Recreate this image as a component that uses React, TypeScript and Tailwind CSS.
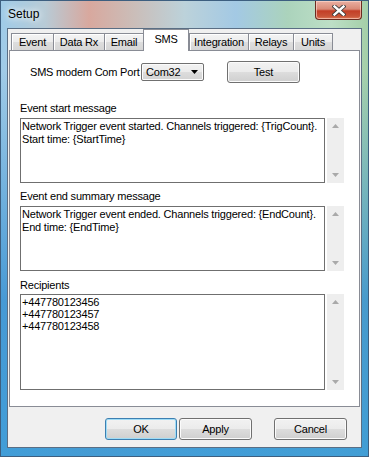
import React from "react";

const F = "font-['Liberation_Sans',Arial,sans-serif]";

const tabs: [string, number][] = [
  ["Event", 42],
  ["Data Rx", 51],
  ["Email", 39],
  ["SMS", 46],
  ["Integration", 59],
  ["Relays", 45],
  ["Units", 40],
];

function Tab({ label, width, selected }: { label: string; width: number; selected: boolean }) {
  if (selected) {
    return (
      <div
        style={{ width }}
        className="relative z-10 mb-[-1px] flex h-[22px] items-start justify-center whitespace-nowrap border-x border-t border-[#898c95] bg-white pt-[3px] text-[11px] leading-[13px] text-black"
      >
        {label}
      </div>
    );
  }
  return (
    <div
      style={{ width }}
      className="flex h-[17px] items-start justify-center whitespace-nowrap border-l border-t border-[#898c95] bg-[linear-gradient(180deg,#f4f4f4_0%,#ececec_50%,#dedede_50%,#d6d6d6_100%)] pt-[2px] text-[11px] leading-[13px] text-black shadow-[inset_1px_1px_0_#ffffff] last:border-r"
    >
      {label}
    </div>
  );
}

function ScrollBar({ h }: { h: number }) {
  return (
    <div
      style={{ height: h }}
      className="flex w-[17px] shrink-0 flex-col items-center justify-between bg-[#eeeeee] py-[6px]"
    >
      <svg width="7" height="4" viewBox="0 0 7 4">
        <path d="M0 4 L3.5 0 L7 4 Z" fill="#a9a9a9" />
      </svg>
      <svg width="7" height="4" viewBox="0 0 7 4">
        <path d="M0 0 L7 0 L3.5 4 Z" fill="#a9a9a9" />
      </svg>
    </div>
  );
}

function TextBox({ h, lines, lh }: { h: number; lines: string[]; lh: string }) {
  return (
    <div className="flex gap-[2px] pl-[10px]">
      <div
        style={{ height: h }}
        className={`w-[305px] shrink-0 overflow-hidden border border-[#6f6f6f] bg-white px-[1px] pt-[1px] text-[11px] text-black ${lh}`}
      >
        {lines.map((l, i) => (
          <div key={i} className="whitespace-pre">
            {l}
          </div>
        ))}
      </div>
      <ScrollBar h={h} />
    </div>
  );
}

function Btn({ label, w, def }: { label: string; w: number; def?: boolean }) {
  return (
    <div
      style={{ width: w }}
      className={
        def
          ? "flex h-[22px] items-center justify-center rounded-[3px] border border-[#3c7fb1] bg-[linear-gradient(180deg,#f2f2f2_0%,#ebebeb_50%,#dddddd_50%,#cfcfcf_100%)] text-[11px] text-black shadow-[inset_0_0_0_1px_#9fdcf6]"
          : "flex h-[22px] items-center justify-center rounded-[3px] border border-[#707070] bg-[linear-gradient(180deg,#f2f2f2_0%,#ebebeb_50%,#dddddd_50%,#cfcfcf_100%)] text-[11px] text-black shadow-[inset_0_0_0_1px_#fbfbfb]"
      }
    >
      {label}
    </div>
  );
}

export default function App() {
  return (
    <div
      className={`${F} flex h-[457px] w-[369px] flex-col border border-[#3d5f80] tracking-[-0.2px] bg-[linear-gradient(180deg,rgba(120,180,225,0)_0px,rgba(120,180,225,0)_70px,rgba(55,145,210,0.85)_300px,rgba(60,155,215,0.95)_457px),linear-gradient(90deg,#9fcbe8_0%,#b8cbd6_12%,#d8a89e_24%,#cbbdb8_36%,#bcd2da_50%,#a3c9e4_64%,#abd3bc_78%,#bddfc6_90%,#a4cfa8_100%)]`}
    >
      {/* title bar */}
      <div className="flex h-[27px] items-start justify-between pl-[7px] pr-[6px]">
        <div className="pt-[6px] text-[12px] leading-[15px] tracking-normal text-black [text-shadow:0_0_6px_#ffffff,0_0_10px_#ffffff]">
          Setup
        </div>
        <div className="flex h-[19px] w-[47px] items-center justify-center rounded-b-[4px] border border-t-0 border-[#6b2b20] bg-[linear-gradient(180deg,#eab0a2_0%,#d98a77_45%,#c33e26_55%,#c85438_85%,#e07a58_100%)] shadow-[inset_0_0_0_1px_rgba(255,220,210,0.6)]">
          <svg width="14" height="11" viewBox="0 0 14 11">
            <path d="M2.5 1.5 L11.5 9.5 M11.5 1.5 L2.5 9.5" stroke="#3a3a3a" strokeWidth="4.2" strokeLinecap="square" />
            <path d="M2.5 1.5 L11.5 9.5 M11.5 1.5 L2.5 9.5" stroke="#ffffff" strokeWidth="2.4" strokeLinecap="square" />
          </svg>
        </div>
      </div>

      {/* client */}
      <div className="mx-[6px] flex h-[420px] flex-col border border-[#5a6e84] bg-[#f0f0f0]">
        {/* tabs */}
        <div className="flex h-[21px] items-end pl-[3px]">
          {tabs.map(([t, w]) => (
            <Tab key={t} label={t} width={w} selected={t === "SMS"} />
          ))}
        </div>

        {/* panel */}
        <div className="ml-[1px] flex h-[357px] w-[351px] flex-col border border-[#898c95] bg-white text-[11px] text-black">
          <div className="mt-[10px] flex h-[22px] items-center pl-[20px]">
            <div className="w-[111px] shrink-0 whitespace-nowrap leading-[13px]">SMS modem Com Port</div>
            <div className="flex h-[18px] w-[63px] shrink-0 items-center justify-between rounded-[2px] border border-[#707070] bg-[linear-gradient(180deg,#f2f2f2_0%,#ebebeb_50%,#dddddd_50%,#d3d3d3_100%)] pl-[4px] pr-[5px] shadow-[inset_0_0_0_1px_#fbfbfb]">
              <span className="leading-[13px]">Com32</span>
              <svg width="7" height="4" viewBox="0 0 7 4">
                <path d="M0 0 L7 0 L3.5 4 Z" fill="#000000" />
              </svg>
            </div>
            <div className="ml-[23px]">
              <Btn label="Test" w={73} />
            </div>
          </div>

          <div className="mt-[19px] whitespace-nowrap pl-[10px] leading-[13px]">Event start message</div>
          <div className="mt-[3px]">
            <TextBox
              h={65}
              lh="leading-[13px]"
              lines={["Network Trigger event started. Channels triggered: {TrigCount}.", "Start time: {StartTime}"]}
            />
          </div>

          <div className="mt-[7px] whitespace-nowrap pl-[10px] leading-[13px]">Event end summary message</div>
          <div className="mt-[3px]">
            <TextBox
              h={65}
              lh="leading-[13px]"
              lines={["Network Trigger event ended. Channels triggered: {EndCount}.", "End time: {EndTime}"]}
            />
          </div>

          <div className="mt-[8px] whitespace-nowrap pl-[10px] leading-[13px]">Recipients</div>
          <div className="mt-[2px]">
            <TextBox h={96} lh="leading-[12px]" lines={["+447780123456", "+447780123457", "+447780123458"]} />
          </div>
        </div>

        {/* buttons */}
        <div className="flex flex-1 items-start justify-end pr-[14px] pt-[11px]">
          <Btn label="OK" w={72} def />
          <div className="ml-[2px]">
            <Btn label="Apply" w={73} />
          </div>
          <div className="ml-[22px]">
            <Btn label="Cancel" w={73} />
          </div>
        </div>
      </div>
    </div>
  );
}
